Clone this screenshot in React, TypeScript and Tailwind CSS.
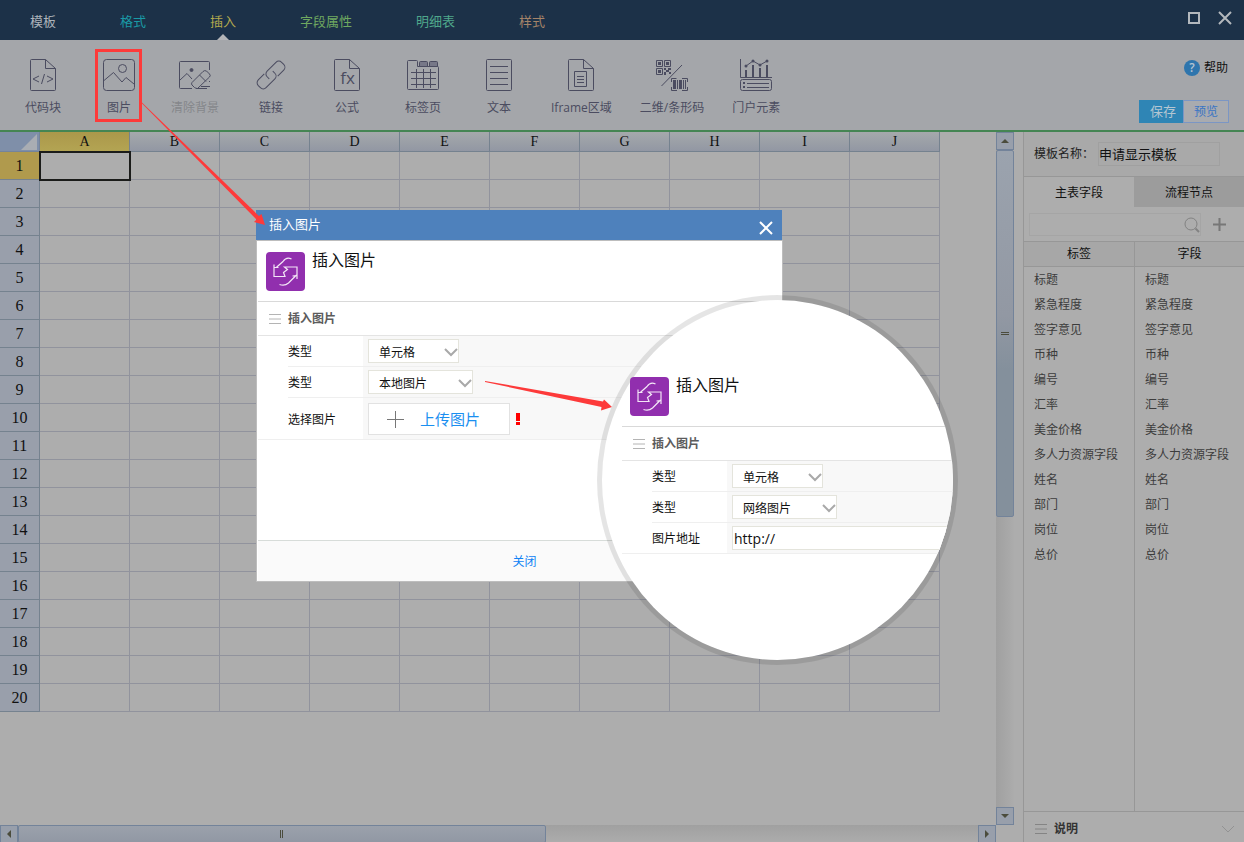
import { useId, useState } from 'react';
import type { ReactNode } from 'react';
import clsx from 'clsx';

const MENUS = [
  { name: '模板', color: 'text-[#adb3ba]' },
  { name: '格式', color: 'text-[#1a9aa6]' },
  { name: '插入', color: 'text-[#b3a94e]' },
  { name: '字段属性', color: 'text-[#6fa860]' },
  { name: '明细表', color: 'text-[#4fa78b]' },
  { name: '样式', color: 'text-[#a58469]' },
];

const COLUMNS = ['A', 'B', 'C', 'D', 'E', 'F', 'G', 'H', 'I', 'J'];
const ROWS = Array.from({ length: 20 }, (_, i) => i + 1);

const FIELDS = [
  '标题', '紧急程度', '签字意见', '币种', '编号', '汇率',
  '美金价格', '多人力资源字段', '姓名', '部门', '岗位', '总价',
];

const DOC_PATH = 'M18.5.5h-14a1 1 0 0 0-1 1v29a1 1 0 0 0 1 1h23a1 1 0 0 0 1-1V9.5l-10-9v9h10';

function ToolIcon({ children }: { children: ReactNode }) {
  return (
    <svg viewBox="0 0 32 32" className="h-8 w-8 overflow-visible" fill="none" stroke="#4b4c60" strokeLinejoin="round">
      {children}
    </svg>
  );
}

const CodeIcon = () => (
  <ToolIcon>
    <path d={DOC_PATH} />
    <path d="M12 17l-6 3 6 3M20 17l6 3-6 3M17.500 15l-3 10" />
  </ToolIcon>
);

const PictureIcon = () => (
  <ToolIcon>
    <rect x="0.5" y="0.5" width="31" height="31" rx="3" />
    <circle cx="19.5" cy="9.500" r="4" />
    <path d="M1 21.500l9.500-8 8.500 9.500 4-4.500 8 6.500" />
  </ToolIcon>
);

const ClearIcon = () => (
  <ToolIcon>
    <path d="M30.500 11V3.500a1 1 0 0 0-1-1h-28a1 1 0 0 0-1 1v25a1 1 0 0 0 1 1H13M30.500 22v1" />
    <circle cx="12.500" cy="11" r="1.500" fill="#4b4c60" />
    <path d="M1 21l7-6.500 5 5.500" />
    <path d="M24 12.500L13 23.500q-1 1.500 0 2.500l2.500 2.500q1.500 1 3 1l12-11.500q1.500-1.500 0-3l-3-3q-2-1-3.500.5zM20.500 16l6.500 6.500" />
    <path d="M17 29.500h11M22 27.500h9" />
  </ToolIcon>
);

const LinkIcon = () => (
  <ToolIcon>
    <g transform="translate(16 16) rotate(-45)">
      <path d="M4 5.500h8.500a4 4 0 0 0 4-4v-3a4 4 0 0 0-4-4H0a4 4 0 0 0-4 4v3" />
      <path d="M-4-5.500h-8.500a4 4 0 0 0-4 4v3a4 4 0 0 0 4 4H0a4 4 0 0 0 4-4v-3" />
    </g>
  </ToolIcon>
);

const FormulaIcon = () => (
  <ToolIcon>
    <path d={DOC_PATH} />
    <text x="16.5" y="25" textAnchor="middle" fontSize="17" fill="#4b4c60" stroke="none">fx</text>
  </ToolIcon>
);

const TabPageIcon = () => (
  <ToolIcon>
    <path d="M.5 29.500v-27a1 1 0 0 1 1-1h8a1 1 0 0 1 1 1v5h20a1 1 0 0 1 1 1v21a1 1 0 0 1-1 1h-29a1 1 0 0 1-1-1z" />
    <path d="M12.500 7.500v-4a1 1 0 0 1 1-1h6a1 1 0 0 1 1 1v4zM22.500 7.500v-4a1 1 0 0 1 1-1h6a1 1 0 0 1 1 1v4z" fill="#777888" />
    <path d="M4 13.500h25M4 19.500h25M4 25.500h25M9.500 10v19M16.500 10v19M23.500 10v19" />
  </ToolIcon>
);

const TextIcon = () => (
  <ToolIcon>
    <rect x="3.5" y="0.5" width="25" height="31" rx="1" />
    <path d="M7 7.500h18M7 13.500h18M7 19.500h18M7 25.500h18" />
  </ToolIcon>
);

const IframeIcon = () => (
  <ToolIcon>
    <path d={DOC_PATH} />
    <path d="M9.500 12.500h12v15h-12zM12 17.500h7M12 20.500h7M12 23.500h7" />
  </ToolIcon>
);

const QrIcon = () => (
  <ToolIcon>
    <path d="M.5 1.500h6v6h-6zM8.500 1.500h6v6h-6zM.5 9.500h6v6h-6z" />
    <path
      stroke="none"
      fill="#4b4c60"
      d="M2 3h3v3H2zM10 3h3v3h-3zM2 11h3v3H2zM8 9h2v2H8zM12 9h3v2h-3zM10 11h3v2h-3zM8 13h2v3H8zM13 13h2v2h-2zM17 21h3v9h-3zM21 21h1v9h-1zM23 21h3v9h-3zM27 21h1v9h-1zM29 21h1v9h-1z"
    />
    <path d="M26 6L5.500 27M15.500 23v-3.500h5M26 19.500h5.500V23M31.500 28v3.500H26M21 31.500h-5.500V28" />
  </ToolIcon>
);

const PortalIcon = () => (
  <ToolIcon>
    <path d="M.5 0v18.500H32" />
    <path d="M6 7l7-5 7 4 7-4" />
    <path d="M6 11v7M13 6v12M20 9v9M27 6v12" strokeWidth="2" />
    <g fill="#4b4c60" stroke="none">
      <circle cx="6" cy="7" r="1.500" />
      <circle cx="13" cy="2" r="1.500" />
      <circle cx="20" cy="6" r="1.500" />
      <circle cx="27" cy="2" r="1.500" />
      <path d="M3 23h2v2H3zM3 27h2v2H3z" />
    </g>
    <rect x="0.5" y="20.5" width="31" height="11" rx="2" />
    <path d="M7 24.500h22M7 28.500h22" />
  </ToolIcon>
);

const TOOLS = [
  { label: '代码块', icon: <CodeIcon /> },
  { label: '图片', icon: <PictureIcon />, marked: true },
  { label: '清除背景', icon: <ClearIcon />, disabled: true },
  { label: '链接', icon: <LinkIcon /> },
  { label: '公式', icon: <FormulaIcon /> },
  { label: '标签页', icon: <TabPageIcon /> },
  { label: '文本', icon: <TextIcon /> },
  { label: 'Iframe区域', icon: <IframeIcon /> },
  { label: '二维/条形码', icon: <QrIcon /> },
  { label: '门户元素', icon: <PortalIcon /> },
];

function Cross({ className }: { className?: string }) {
  return (
    <svg viewBox="0 0 14 14" className={clsx('h-3.5 w-3.5', className)} fill="none" stroke="currentColor" strokeWidth="2">
      <path d="M1 1l12 12M13 1L1 13" />
    </svg>
  );
}

function Bars({ className }: { className?: string }) {
  return (
    <svg viewBox="0 0 12 10" className={clsx('h-2.5 w-3', className)} fill="none" stroke="currentColor">
      <path d="M0 .5h12M0 5h12M0 9.500h12" />
    </svg>
  );
}

function Header() {
  return (
    <header className="flex h-10 shrink-0 items-center bg-[#1c3148] pl-[30px] pr-3">
      <nav className="flex h-full items-center gap-16">
        {MENUS.map(menu => (
          <a key={menu.name} href="#" className={clsx('relative flex h-full items-center pt-1 text-[13px]', menu.color)}>
            {menu.name}
            {menu.name === '插入' && (
              <svg viewBox="0 0 12 6" className="absolute bottom-0 left-[7px] h-1.5 w-3" fill="#b4b5b8">
                <path d="M0 6l6-6 6 6z" />
              </svg>
            )}
          </a>
        ))}
      </nav>
      <div className="ml-auto flex items-center gap-[18px] pb-1 text-[#b3b8bd]">
        <button type="button" aria-label="最大化" className="h-3 w-3 border-2 border-current" />
        <button type="button" aria-label="退出"><Cross /></button>
      </div>
    </header>
  );
}

function Toolbar() {
  return (
    <div className="flex h-[92px] shrink-0 border-b-2 border-[#458553] bg-[#a4a6aa] pl-[5px]">
      {TOOLS.map(tool => (
        <button
          key={tool.label}
          type="button"
          disabled={tool.disabled}
          className={clsx(
            'relative flex min-w-[76px] flex-col items-center px-[14px] pt-[19px] text-xs whitespace-nowrap',
            tool.disabled ? 'text-[#85868a]' : 'text-[#4b4c60]'
          )}
        >
          {tool.icon}
          <span className="mt-[9px]">{tool.label}</span>
          {tool.marked && <span className="absolute top-[9px] left-[14px] h-[73px] w-[47px] border-3 border-[#fd3a3a]" />}
        </button>
      ))}
      <div className="ml-auto flex flex-col items-end justify-between pt-5 pr-[15px] pb-[7px]">
        <a href="#" className="flex items-center gap-1 pr-px text-xs text-[#111]">
          <span className="flex h-4 w-4 items-center justify-center rounded-full bg-[#2e75ad] text-xs font-semibold text-[#b5c4d2]">?</span>
          帮助
        </a>
        <div className="flex">
          <button type="button" className="h-[23px] w-11 bg-[#2f85b5] pl-1 text-[13px] text-[#b4c6d2]">保存</button>
          <button type="button" className="h-[23px] w-[46px] border border-[#7b96c4] bg-[#a9abaf] text-xs text-[#3a75c4]">预览</button>
        </div>
      </div>
    </div>
  );
}

const ARROWS = {
  up: 'M0 6l4-4 4 4z',
  down: 'M0 2l4 4 4-4z',
  left: 'M6 0L2 4l4 4z',
  right: 'M2 0l4 4-4 4z',
};

function ScrollButton({ dir }: { dir: keyof typeof ARROWS }) {
  return (
    <button
      type="button"
      aria-label={dir}
      className="flex h-[18px] w-[18px] shrink-0 items-center justify-center border border-[#73839a] bg-[#989fab]"
    >
      <svg viewBox="0 0 8 8" className="h-2 w-2" fill="#4b4c3c"><path d={ARROWS[dir]} /></svg>
    </button>
  );
}

function Sheet() {
  return (
    <div className="flex min-w-0 flex-1 pr-[9px]">
      <div className="flex min-w-0 flex-1 flex-col">
        <div className="min-h-0 flex-1 overflow-hidden">
          <table className="w-[940px] table-fixed border-separate border-spacing-0 font-['Liberation_Serif','Noto_Sans_CJK_SC',serif] text-[#111]">
            <thead>
              <tr className="h-5">
                <th className="w-10 border-r border-b border-[#75849a] bg-[#7f8fa9] p-0">
                  <svg viewBox="0 0 16 16" className="mr-0.5 ml-auto h-4 w-4" fill="#a9adb3"><path d="M16 0v16H0z" /></svg>
                </th>
                {COLUMNS.map(col => (
                  <th
                    key={col}
                    className={clsx(
                      'border-r border-b border-[#75828f] bg-linear-to-b p-0 text-sm leading-[19px] font-normal',
                      col === 'A' ? 'from-[#ab984a] to-[#b3a453]' : 'from-[#a5a9ab] to-[#9297a3]'
                    )}
                  >
                    {col}
                  </th>
                ))}
              </tr>
            </thead>
            <tbody>
              {ROWS.map(row => (
                <tr key={row} className="h-7">
                  <th
                    className={clsx(
                      'border-r border-b border-[#75828f] p-0 text-base leading-[27px] font-normal',
                      row === 1 ? 'bg-[#b09a4d]' : 'bg-[#999fab]'
                    )}
                  >
                    {row}
                  </th>
                  {COLUMNS.map(col => (
                    <td
                      key={col}
                      className={clsx(
                        'border-r border-b border-[#91939d] p-0',
                        row === 1 && col === 'A' && 'outline-2 -outline-offset-1 outline-[#1b1c1a]'
                      )}
                    />
                  ))}
                </tr>
              ))}
            </tbody>
          </table>
        </div>
        <div className="flex h-[17px] shrink-0 overflow-hidden bg-linear-to-b from-[#a0a0a0] to-[#acacac]">
          <ScrollButton dir="left" />
          <div className="flex h-[18px] w-[53%] items-center justify-center gap-px rounded-xs border border-[#73839a] bg-linear-to-b from-[#9ba1ab] to-[#9198a4]">
            <span className="h-2 w-px bg-[#4b4c3c]" />
            <span className="h-2 w-px bg-[#4b4c3c]" />
          </div>
          <div className="flex-1" />
          <ScrollButton dir="right" />
        </div>
      </div>
      <div className="mb-[17px] flex w-[18px] flex-col bg-linear-to-r from-[#a0a0a0] to-[#acacac]">
        <ScrollButton dir="up" />
        <div className="flex h-[53%] flex-col items-center justify-center gap-px rounded-xs border border-[#73839a] bg-linear-to-b from-[#9ba3ae] via-[#9298a3] via-45% to-[#84909c] to-60%">
          <span className="h-px w-2 bg-[#4b4c3c]" />
          <span className="h-px w-2 bg-[#4b4c3c]" />
        </div>
        <div className="flex-1" />
        <ScrollButton dir="down" />
      </div>
    </div>
  );
}

function FieldPanel() {
  return (
    <aside className="flex w-[221px] shrink-0 flex-col border-l border-[#979797] text-xs">
      <div className="flex h-[45px] shrink-0 items-center border-b border-[#979797] bg-[#a9a9a9] pl-[10px]">
        <label htmlFor="tplName" className="w-16 whitespace-nowrap text-[#222]">模板名称：</label>
        <input
          id="tplName"
          defaultValue="申请显示模板"
          className="h-6 w-[122px] border border-[#a0a0a0] pb-0.5 text-[13px] text-[#111] outline-none"
        />
      </div>
      <div className="grid h-[30px] shrink-0 grid-cols-2 text-[#111]">
        <button type="button" className="pt-0.5">主表字段</button>
        <button type="button" className="bg-[#9c9c9c] pt-0.5">流程节点</button>
      </div>
      <div className="flex h-[35px] shrink-0 items-center border-b border-[#979797] pl-[5px]">
        <div className="relative">
          <input type="search" aria-label="搜索字段" className="block h-[23px] w-[172px] border border-[#a5a5a5] pr-5 outline-none" />
          <svg viewBox="0 0 16 16" className="absolute top-1 right-px h-4 w-4" fill="none" stroke="#828282">
            <circle cx="7" cy="7" r="6" />
            <path d="M11.500 11.500L15 15" strokeWidth="2" />
          </svg>
        </div>
        <button type="button" aria-label="添加字段" className="ml-3 text-[#777]">
          <svg viewBox="0 0 13 13" className="h-[13px] w-[13px]" fill="none" stroke="currentColor" strokeWidth="2">
            <path d="M6.500 0v13M0 6.500h13" />
          </svg>
        </button>
      </div>
      <div className="min-h-0 flex-1 overflow-hidden">
        <table className="h-full w-full table-fixed border-separate border-spacing-0 text-[#3c3c3c]">
          <thead>
            <tr className="h-[25px] text-[#111]">
              <th className="w-[111px] border-r border-b border-[#979797] bg-[#a7a7a7] p-0 font-normal">标签</th>
              <th className="border-b border-[#979797] bg-[#a7a7a7] p-0 font-normal">字段</th>
            </tr>
          </thead>
          <tbody>
            {FIELDS.map(field => (
              <tr key={field} className="h-[25px]">
                <td className="border-r border-[#979797] p-0 pl-[10px] whitespace-nowrap">{field}</td>
                <td className="p-0 pl-[10px] whitespace-nowrap">{field}</td>
              </tr>
            ))}
            <tr>
              <td className="border-r border-[#979797] p-0" />
              <td className="p-0" />
            </tr>
          </tbody>
        </table>
      </div>
      <div className="flex h-[31px] shrink-0 items-center border-t border-[#979797] pt-1 pr-[10px] pl-[11px]">
        <Bars className="text-[#848484]" />
        <span className="ml-[7px] font-semibold text-[#333]">说明</span>
        <svg viewBox="0 0 12 8" className="ml-auto h-2 w-3" fill="none" stroke="#929292"><path d="M0 1l6 6 6-6" /></svg>
      </div>
    </aside>
  );
}

function FormRow({ label, id, last, children }: { label: string; id: string; last?: boolean; children: ReactNode }) {
  return (
    <div className={clsx('flex', last ? 'border-b border-[#efefef]' : 'ml-[30px]')}>
      <label
        htmlFor={id}
        className={clsx('flex shrink-0 items-center pt-0.5', last ? 'w-[105px] pl-[30px]' : 'w-[75px] border-b border-[#efefef]')}
      >
        {label}
      </label>
      <div className={clsx('flex flex-1 items-center bg-[#f8f8f8] pl-[5px]', !last && 'border-b border-[#efefef]')}>
        {children}
      </div>
    </div>
  );
}

interface DropDownProps {
  id: string;
  options: string[];
  value: string;
  wide?: boolean;
}

function DropDown({ id, options, value, wide }: DropDownProps) {
  const [selected, setSelected] = useState(value);

  return (
    <div className={clsx('relative my-[3px]', wide ? 'w-[105px]' : 'w-[91px]')}>
      <select
        id={id}
        value={selected}
        onChange={e => setSelected(e.target.value)}
        className="block h-6 w-full appearance-none border border-[#e4e4dc] bg-white pt-1 pl-[10px] outline-none"
      >
        {options.map(o => <option key={o}>{o}</option>)}
      </select>
      <svg viewBox="0 0 14 9" className="pointer-events-none absolute top-[9px] right-px h-[9px] w-3.5" fill="none" stroke="#a9a9a9" strokeWidth="2">
        <path d="M1 1l6 6 6-6" />
      </svg>
    </div>
  );
}

function PictureForm({ source }: { source: 'local' | 'network' }) {
  const id = useId();

  return (
    <div className="text-xs text-[#111]">
      <div className="flex h-[61px] gap-[7px] border-b border-[#d9d9d9] pt-[11px] pl-2">
        <svg viewBox="0 0 39 39" className="h-[39px] w-[39px] shrink-0">
          <rect width="39" height="39" rx="4" fill="#912fae" />
          <path
            d="M25.500 7C22 5 19 6.500 17 9.500L10.500 15.300M8 12.500v12h11l-1.500-4 4-3-3-2.500h12.500v12M30.500 23l-8 8q-4 3.500-9 1.500M8.500 15.500h4M30.500 23.500l-4 .5"
            fill="none"
            stroke="#f3e6f6"
            strokeWidth="1.200"
          />
        </svg>
        <h2 className="-mt-1 text-base leading-6">插入图片</h2>
      </div>
      <div className="flex h-[34px] items-center gap-[7px] border-b border-[#e4e4e4] pl-[11px] font-semibold text-[#5c5c5c]">
        <Bars className="text-[#b4b4b4]" />
        插入图片
      </div>
      <FormRow label="类型" id={`${id}-target`}>
        <DropDown id={`${id}-target`} value="单元格" options={['单元格', '背景图']} />
      </FormRow>
      <FormRow label="类型" id={`${id}-source`}>
        <DropDown id={`${id}-source`} wide value={source === 'local' ? '本地图片' : '网络图片'} options={['本地图片', '网络图片']} />
      </FormRow>
      {source === 'local' ? (
        <FormRow label="选择图片" id={`${id}-file`} last>
          <button
            id={`${id}-file`}
            type="button"
            className="mt-[5px] mb-1 flex h-8 w-[142px] items-center gap-4 border border-[#e2e2e2] bg-white pl-[18px] text-[15px] leading-5 text-[#1a8ff0]"
          >
            <svg viewBox="0 0 17 17" className="h-[17px] w-[17px]" fill="none" stroke="#777">
              <path d="M8.500 0v17M0 8.500h17" />
            </svg>
            上传图片
          </button>
          <svg viewBox="0 0 4 12" className="ml-1.5 h-3 w-1" fill="#f00"><path d="M0 0h4v8H0zM0 9h4v3H0z" /></svg>
        </FormRow>
      ) : (
        <FormRow label="图片地址" id={`${id}-url`} last>
          <input
            id={`${id}-url`}
            defaultValue="http://"
            className="my-[3px] h-6 w-full border border-[#e4e4dc] bg-white px-px text-sm outline-none"
          />
        </FormRow>
      )}
    </div>
  );
}

function InsertDialog() {
  return (
    <section className="absolute top-[210px] left-64 flex h-[372px] w-[527px] flex-col">
      <div className="mr-px flex h-[30px] shrink-0 items-center bg-[#4e81bc] pr-[9px] pl-[13px] text-[13px] text-white">
        插入图片
        <button type="button" aria-label="关闭窗口" className="ml-auto pt-1.5"><Cross /></button>
      </div>
      <div className="flex flex-1 flex-col border border-[#bdbdbd] bg-white px-px">
        <PictureForm source="local" />
        <div className="mt-auto flex h-[41px] items-center justify-center border-t border-[#d7dcd9] bg-[#fafafa] pt-0.5 pl-2.5">
          <button type="button" className="text-xs text-[#0f82f5]">关闭</button>
        </div>
      </div>
    </section>
  );
}

// round magnifier with the second state of the form
function Magnifier() {
  return (
    <section className="absolute top-[295px] left-[597px] h-[370px] w-[361px] rounded-[50%] border-5 border-black/10 bg-white bg-clip-padding">
      <div className="h-full overflow-hidden rounded-r-[50%] pt-[66px] pl-5">
        <PictureForm source="network" />
      </div>
    </section>
  );
}

export default function App() {
  return (
    <div className="relative flex h-screen flex-col overflow-hidden bg-[#adadad] font-['Open_Sans','Noto_Sans_CJK_SC',sans-serif]">
      <Header />
      <Toolbar />
      <main className="flex min-h-0 flex-1">
        <Sheet />
        <FieldPanel />
      </main>

      <InsertDialog />
      <Magnifier />

      {/* Pointer arrows */}
      <svg className="pointer-events-none absolute top-0 left-0 h-[420px] w-[620px]" fill="#fd3a3a">
        <path d="M142 102.500l117 113.500 2.500-2 3.500 11-11-3 2.500-2.500L141.500 103z" />
        <path d="M485 381l118 20.500 1-2 8 7.500-11 3.500.5-3.500L485 382z" />
      </svg>
    </div>
  );
}
